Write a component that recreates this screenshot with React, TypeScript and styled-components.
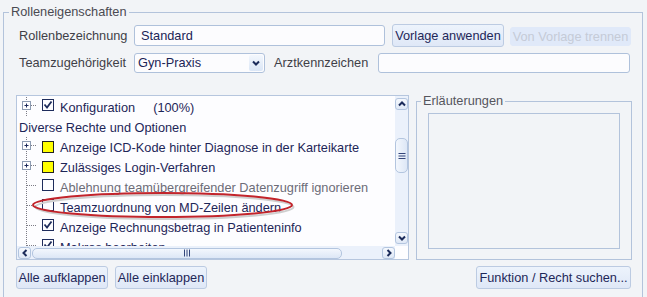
import React from 'react';
import styled, { createGlobalStyle } from 'styled-components';

const GlobalStyle = createGlobalStyle`
  html, body {
    margin: 0;
    padding: 0;
    background: #f2f4f7;
  }
  body {
    font-family: "Liberation Sans", Arial, sans-serif;
    font-size: 12.75px;
    color: #3f3f47;
  }
  * {
    box-sizing: border-box;
  }
`;

const Page = styled.div`
  width: 647px;
  height: 297px;
  overflow: hidden;
  padding: 4px 4px 0 3px;
`;

const Group = styled.fieldset`
  margin: 0;
  min-width: 0;
  height: 330px;
  border: 1px solid #b3c3db;
  padding: 3px 10px 0 12px;
`;

const Legend = styled.legend`
  margin-left: -7px;
  padding: 0 2px;
  line-height: 16px;
  color: #4a4a52;
`;

const FormRow = styled.div<{ $height: number; $gap?: number }>`
  display: flex;
  align-items: center;
  height: ${(p) => p.$height}px;
  margin-bottom: ${(p) => p.$gap ?? 0}px;
`;

const Label = styled.label<{ $width?: number }>`
  flex: none;
  width: ${(p) => (p.$width ? `${p.$width}px` : 'auto')};
  padding-left: ${(p) => (p.$width ? 3 : 0)}px;
  margin-right: ${(p) => (p.$width ? 0 : 10)}px;
  white-space: nowrap;
  color: #3f3f47;
`;

const TextInput = styled.input<{ $width?: number }>`
  flex: ${(p) => (p.$width ? 'none' : '1')};
  width: ${(p) => (p.$width ? `${p.$width}px` : 'auto')};
  min-width: 0;
  height: ${(p) => (p.$width ? 21 : 20)}px;
  margin-right: ${(p) => (p.$width ? 7 : 2)}px;
  padding: 0 6px;
  font: inherit;
  color: #1b2456;
  background: #fcfcfe;
  border: 1px solid #afc1db;
  border-radius: 3px;
  outline: none;
`;

const Select = styled.div`
  flex: none;
  display: flex;
  align-items: center;
  width: 131px;
  height: 20px;
  margin-right: 9px;
  padding: 0 1px 0 3px;
  color: #1b2456;
  background: #fcfcfe;
  border: 1px solid #afc1db;
  border-radius: 3px;
`;

const SelectText = styled.span`
  flex: 1;
`;

const SelectArrow = styled.span`
  display: flex;
  align-items: center;
  justify-content: center;
  width: 14px;
  height: 16px;
  background: linear-gradient(#f3f7fd, #dbe6f6);
  border-radius: 2px;
`;

const Button = styled.button<{ $width: number }>`
  flex: none;
  width: ${(p) => p.$width}px;
  height: 23px;
  padding: 0;
  font: inherit;
  color: #1e2758;
  white-space: nowrap;
  background: linear-gradient(#edf3fc, #dfe8f7);
  border: 1px solid #bccbe2;
  border-radius: 3px;
`;

const DisabledButton = styled(Button)`
  height: 19px;
  align-self: flex-end;
  margin-bottom: 1px;
  margin-left: 6px;
  color: #c5cbd7;
  background: #e0e9f9;
  border-color: #e0e9f9;
`;

const Main = styled.div`
  display: flex;
  align-items: flex-start;
  gap: 7px;
  height: 167px;
`;

const TreePanel = styled.div`
  position: relative;
  flex: none;
  width: 393px;
  height: 165px;
  margin-top: 2px;
  display: grid;
  grid-template-columns: 1fr 13px;
  grid-template-rows: 1fr 13px;
  background: #fdfdff;
  border: 1px solid #b6c6de;
`;

const TreeView = styled.div`
  overflow: hidden;
  padding-top: 1px;
`;

const TreeRow = styled.div<{ $muted?: boolean; $root?: boolean }>`
  display: flex;
  align-items: center;
  height: 20px;
  padding-left: ${(p) => (p.$root ? 2 : 0)}px;
  white-space: nowrap;
  color: ${(p) => (p.$muted ? '#6c6c78' : '#1d2658')};
`;

const BranchIcon = styled.svg`
  flex: none;
  align-self: stretch;
  width: 20px;
  height: 20px;
`;

const Check = styled.svg`
  flex: none;
  align-self: flex-start;
  margin: 2px 6px 0 5px;
  width: 12px;
  height: 12px;
`;

const Marker = styled.span`
  flex: none;
  width: 12px;
  height: 12px;
  margin: 0 6px 0 5px;
  position: relative;
  &::before {
    content: '';
    position: absolute;
    left: 2px;
    top: 2px;
    width: 10px;
    height: 10px;
    background: #b9b9b9;
  }
  &::after {
    content: '';
    position: absolute;
    left: 0;
    top: 0;
    width: 10px;
    height: 10px;
    background: #ffff00;
    border: 1px solid #222;
  }
`;

const Percent = styled.span`
  margin-left: 18px;
`;

const VBar = styled.div`
  display: flex;
  flex-direction: column;
  padding: 2px 0;
  background: #ebf1fb;
`;

const HBar = styled.div`
  display: flex;
  align-items: center;
  padding: 1px 0 0 1px;
  background: #ebf1fb;
`;

const Corner = styled.div`
  background: #fdfdff;
`;

const ArrowButton = styled.div`
  flex: none;
  display: flex;
  align-items: center;
  justify-content: center;
  width: 13px;
  height: 12px;
  background: linear-gradient(#f5f8fd, #dfe8f6);
  border: 1px solid #b3c5df;
  border-radius: 3px;
`;

const Track = styled.div<{ $vertical?: boolean }>`
  flex: 1;
  display: flex;
  flex-direction: ${(p) => (p.$vertical ? 'column' : 'row')};
  padding: ${(p) => (p.$vertical ? '28px 0 0' : '0 0 0 1px')};
`;

const Thumb = styled.div<{ $vertical?: boolean }>`
  display: flex;
  align-items: center;
  justify-content: center;
  width: ${(p) => (p.$vertical ? '13px' : '310px')};
  height: ${(p) => (p.$vertical ? '35px' : '11px')};
  background: ${(p) =>
    p.$vertical
      ? 'linear-gradient(90deg, #f3f7fd, #dde7f6)'
      : 'linear-gradient(#f3f7fd, #dde7f6)'};
  border: 1px solid #b3c5df;
  border-radius: 5px;
`;

const Callout = styled.svg`
  position: absolute;
  left: 10px;
  top: 88px;
  width: 280px;
  height: 40px;
  overflow: visible;
  pointer-events: none;
`;

const SidePanel = styled.fieldset`
  flex: none;
  width: 216px;
  height: 167px;
  margin: 0;
  min-width: 0;
  padding: 4px 11px 10px 11px;
  border: 1px solid #b3c3db;
`;

const SideLegend = styled(Legend)`
  color: #55555d;
`;

const InfoBox = styled.div`
  height: 136px;
  border: 1px solid #b3c3db;
`;

const Footer = styled.div`
  display: flex;
  align-items: center;
  gap: 7px;
  margin-top: 6px;
  padding-right: 1px;
`;

const Spacer = styled.div`
  flex: 1;
`;

const Branch = ({ expandable }: { expandable?: boolean }) => (
  <BranchIcon viewBox="0 0 20 20">
    <line x1="9.5" y1="0" x2="9.5" y2="20" stroke="#7c7c86" strokeDasharray="1 1" />
    {expandable ? (
      <>
        <line x1="14" y1="8.5" x2="19" y2="8.5" stroke="#7c7c86" strokeDasharray="1 1" />
        <rect x="5.5" y="4.5" width="8" height="8" fill="#fdfdff" stroke="#8e9cb2" />
        <line x1="7.5" y1="8.5" x2="11.5" y2="8.5" stroke="#1f2b5c" />
        <line x1="9.5" y1="6.5" x2="9.5" y2="10.5" stroke="#1f2b5c" />
      </>
    ) : (
      <line x1="10" y1="8.5" x2="19" y2="8.5" stroke="#7c7c86" strokeDasharray="1 1" />
    )}
  </BranchIcon>
);

const CheckBox = ({ checked }: { checked?: boolean }) => (
  <Check viewBox="0 0 12 12">
    <rect x="0.5" y="0.5" width="11" height="11" fill="#fdfdff" stroke="#1e2c5c" />
    {checked && (
      <path d="M2.5 5.5 L5 8.5 L9.5 2.5" fill="none" stroke="#1e2c5c" strokeWidth="1.8" />
    )}
  </Check>
);

const Chevron = ({ dir }: { dir: 'up' | 'down' | 'left' | 'right' }) => {
  const paths = {
    up: 'M2 6.5 L5 3.5 L8 6.5',
    down: 'M2 3.5 L5 6.5 L8 3.5',
    left: 'M6.5 2 L3.5 5 L6.5 8',
    right: 'M3.5 2 L6.5 5 L3.5 8',
  };
  return (
    <svg width="10" height="10" viewBox="0 0 10 10">
      <path d={paths[dir]} fill="none" stroke="#1b2b5a" strokeWidth="2" />
    </svg>
  );
};

const Grip = ({ vertical }: { vertical?: boolean }) => (
  <svg width="8" height="8" viewBox="0 0 8 8">
    {[1.5, 4, 6.5].map((v) =>
      vertical ? (
        <line key={v} x1="0.5" y1={v} x2="7.5" y2={v} stroke="#33457a" />
      ) : (
        <line key={v} x1={v} y1="0.5" x2={v} y2="7.5" stroke="#33457a" />
      )
    )}
  </svg>
);

export default function App() {
  return (
    <Page>
      <GlobalStyle />
      <Group>
        <Legend>Rolleneigenschaften</Legend>
        <FormRow $height={24} $gap={5}>
          <Label $width={118}>Rollenbezeichnung</Label>
          <TextInput $width={251} defaultValue="Standard" />
          <Button $width={112}>Vorlage anwenden</Button>
          <DisabledButton $width={121} disabled>
            Von Vorlage trennen
          </DisabledButton>
        </FormRow>
        <FormRow $height={21} $gap={20}>
          <Label $width={118}>Teamzugehörigkeit</Label>
          <Select>
            <SelectText>Gyn-Praxis</SelectText>
            <SelectArrow>
              <Chevron dir="down" />
            </SelectArrow>
          </Select>
          <Label>Arztkennzeichen</Label>
          <TextInput />
        </FormRow>
        <Main>
          <TreePanel>
            <TreeView>
              <TreeRow>
                <Branch expandable />
                <CheckBox checked />
                Konfiguration<Percent>(100%)</Percent>
              </TreeRow>
              <TreeRow $root>Diverse Rechte und Optionen</TreeRow>
              <TreeRow>
                <Branch expandable />
                <Marker />
                Anzeige ICD-Kode hinter Diagnose in der Karteikarte
              </TreeRow>
              <TreeRow>
                <Branch expandable />
                <Marker />
                Zulässiges Login-Verfahren
              </TreeRow>
              <TreeRow $muted>
                <Branch />
                <CheckBox />
                Ablehnung teamübergreifender Datenzugriff ignorieren
              </TreeRow>
              <TreeRow>
                <Branch />
                <CheckBox />
                Teamzuordnung von MD-Zeilen ändern
              </TreeRow>
              <TreeRow>
                <Branch />
                <CheckBox checked />
                Anzeige Rechnungsbetrag in Patienteninfo
              </TreeRow>
              <TreeRow>
                <Branch />
                <CheckBox checked />
                Makros bearbeiten
              </TreeRow>
            </TreeView>
            <VBar>
              <ArrowButton>
                <Chevron dir="up" />
              </ArrowButton>
              <Track $vertical>
                <Thumb $vertical>
                  <Grip vertical />
                </Thumb>
              </Track>
              <ArrowButton>
                <Chevron dir="down" />
              </ArrowButton>
            </VBar>
            <HBar>
              <ArrowButton>
                <Chevron dir="left" />
              </ArrowButton>
              <Track>
                <Thumb>
                  <Grip />
                </Thumb>
              </Track>
              <ArrowButton>
                <Chevron dir="right" />
              </ArrowButton>
            </HBar>
            <Corner />
            <Callout viewBox="0 0 280 40">
              <ellipse cx="137.5" cy="23" rx="129" ry="12" fill="none" stroke="#cfcfcf" strokeWidth="2" />
              <ellipse cx="135.5" cy="21" rx="129.5" ry="12" fill="none" stroke="#c2242b" strokeWidth="2" />
            </Callout>
          </TreePanel>
          <SidePanel>
            <SideLegend>Erläuterungen</SideLegend>
            <InfoBox />
          </SidePanel>
        </Main>
        <Footer>
          <Button $width={92}>Alle aufklappen</Button>
          <Button $width={92}>Alle einklappen</Button>
          <Spacer />
          <Button $width={155}>Funktion / Recht suchen...</Button>
        </Footer>
      </Group>
    </Page>
  );
}
